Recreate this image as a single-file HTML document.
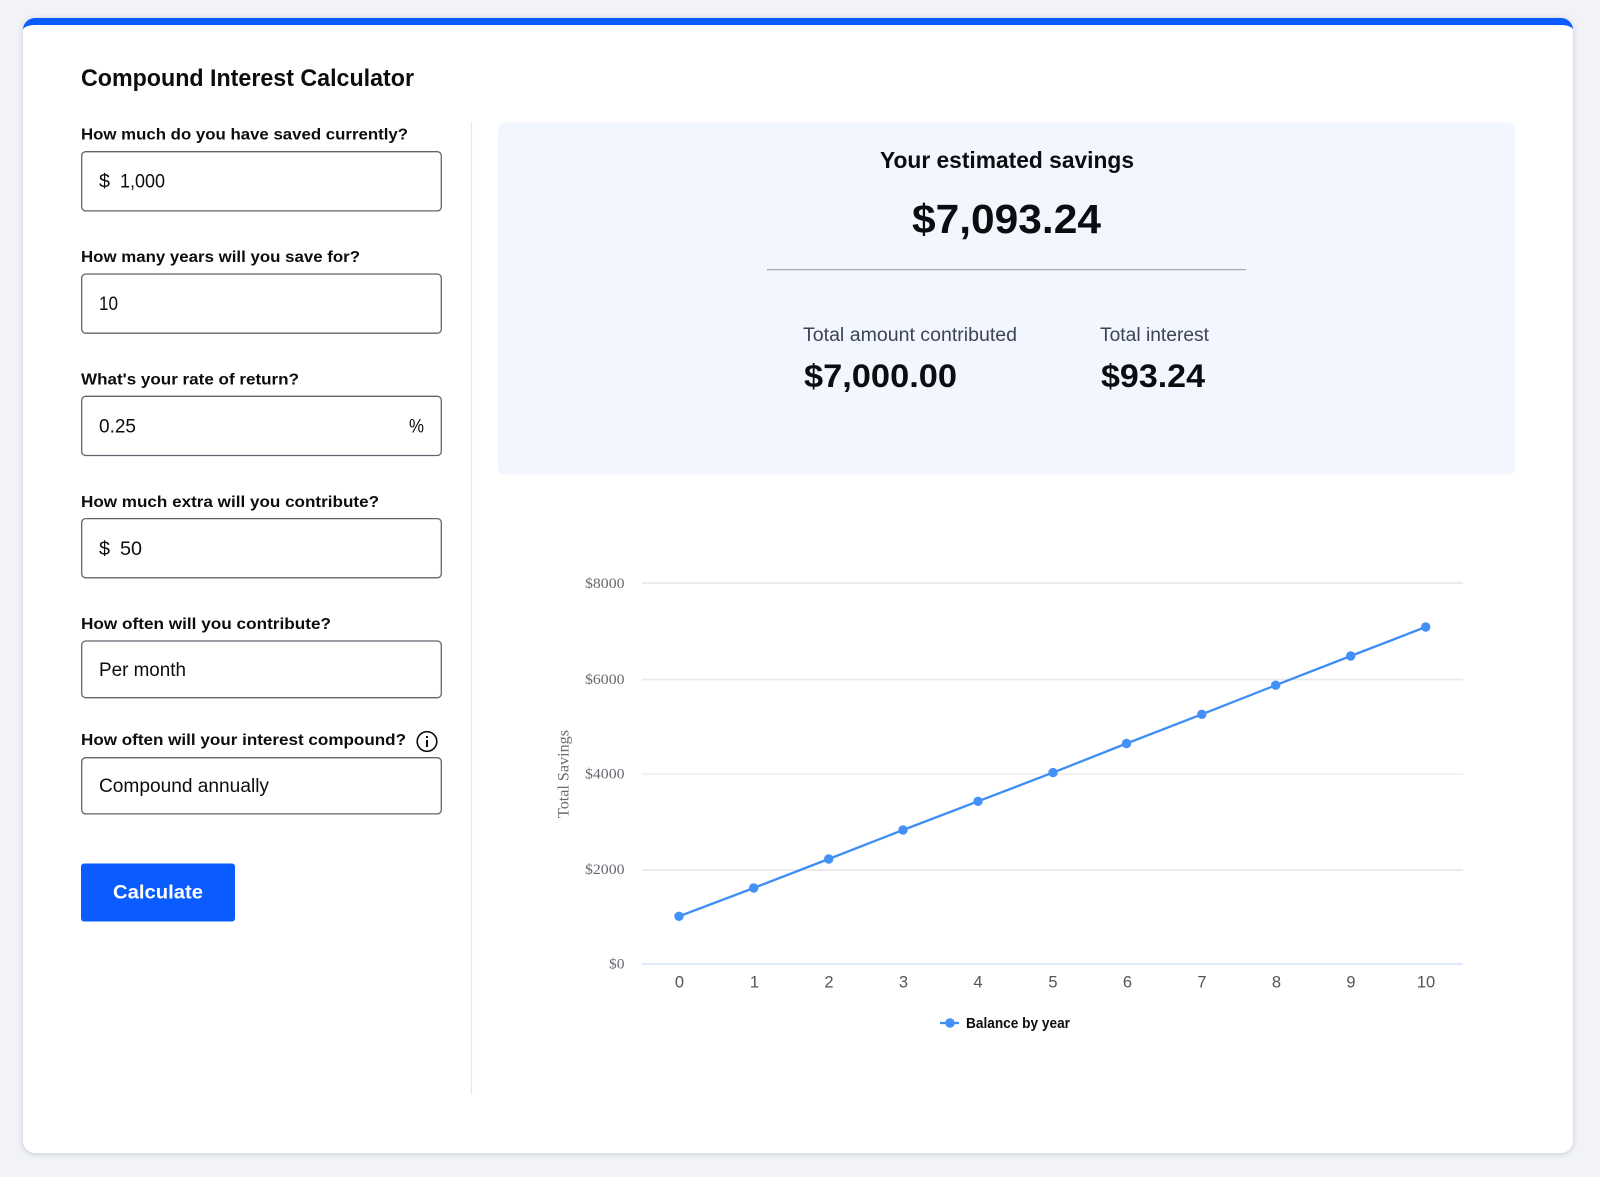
<!DOCTYPE html>
<html lang="en">
<head>
<meta charset="utf-8">
<title>Compound Interest Calculator</title>
<style>
html,body{margin:0;padding:0;background:#f1f3f7;}
body{width:1600px;height:1177px;position:relative;overflow:hidden;}
.card{position:absolute;left:23px;top:18px;width:1550px;height:1135px;box-sizing:border-box;background:#fff;border-top:7.5px solid #0a5cff;border-radius:12px;box-shadow:0 1px 6px rgba(60,70,100,.24);}
svg{position:absolute;left:0;top:0;}
text{font-family:"Liberation Sans",Arial,sans-serif;fill:#0c0d10;}
.l{font-size:16px;font-weight:700;}
.v{font-size:19px;}
.y{font-family:"Liberation Serif",serif;font-size:15px;fill:#666a70;}
.x{font-size:16.5px;fill:#555;text-anchor:middle;}
.box{fill:#fff;stroke:#62646f;stroke-width:1.3;}
.g{stroke:#eaeaea;stroke-width:1.8;}
</style>
</head>
<body>
<div class="card"></div>
<svg width="1600" height="1177" viewBox="0 0 1600 1177" xmlns="http://www.w3.org/2000/svg">
  <text x="81" y="86" font-size="24" font-weight="700" textLength="333" lengthAdjust="spacingAndGlyphs">Compound Interest Calculator</text>

  <text class="l" x="81" y="139.5" textLength="327" lengthAdjust="spacingAndGlyphs">How much do you have saved currently?</text>
  <rect class="box" x="81.7" y="151.7" width="359.6" height="59.2" rx="4"/>
  <text class="v" x="99" y="187.5" textLength="11" lengthAdjust="spacingAndGlyphs">$</text>
  <text class="v" x="120" y="187.5" textLength="45" lengthAdjust="spacingAndGlyphs">1,000</text>

  <text class="l" x="81" y="262" textLength="279" lengthAdjust="spacingAndGlyphs">How many years will you save for?</text>
  <rect class="box" x="81.7" y="274" width="359.6" height="59.2" rx="4"/>
  <text class="v" x="99" y="310" textLength="19" lengthAdjust="spacingAndGlyphs">10</text>

  <text class="l" x="81" y="384.5" textLength="218" lengthAdjust="spacingAndGlyphs">What's your rate of return?</text>
  <rect class="box" x="81.7" y="396.3" width="359.6" height="59.2" rx="4"/>
  <text class="v" x="99" y="432.5" textLength="37" lengthAdjust="spacingAndGlyphs">0.25</text>
  <text class="v" x="409" y="432.5" textLength="15" lengthAdjust="spacingAndGlyphs">%</text>

  <text class="l" x="81" y="507" textLength="298" lengthAdjust="spacingAndGlyphs">How much extra will you contribute?</text>
  <rect class="box" x="81.7" y="518.6" width="359.6" height="59.2" rx="4"/>
  <text class="v" x="99" y="555" textLength="11" lengthAdjust="spacingAndGlyphs">$</text>
  <text class="v" x="120" y="555" textLength="22" lengthAdjust="spacingAndGlyphs">50</text>

  <text class="l" x="81" y="629" textLength="250" lengthAdjust="spacingAndGlyphs">How often will you contribute?</text>
  <rect class="box" x="81.7" y="641" width="359.6" height="56.7" rx="4"/>
  <text class="v" x="99" y="676" textLength="87" lengthAdjust="spacingAndGlyphs">Per month</text>

  <text class="l" x="81" y="745" textLength="325" lengthAdjust="spacingAndGlyphs">How often will your interest compound?</text>
  <circle cx="427" cy="741.5" r="9.8" fill="none" stroke="#0c0d10" stroke-width="1.6"/>
  <rect x="426" y="740" width="2" height="7" fill="#0c0d10"/>
  <rect x="426" y="736" width="2" height="2" fill="#0c0d10"/>
  <rect class="box" x="81.7" y="757.7" width="359.6" height="56.2" rx="4"/>
  <text class="v" x="99" y="792" textLength="170" lengthAdjust="spacingAndGlyphs">Compound annually</text>

  <rect x="81" y="863.5" width="154" height="58" rx="3" fill="#0a5cff"/>
  <text x="113" y="898.5" font-size="19" font-weight="700" style="fill:#fff" textLength="90" lengthAdjust="spacingAndGlyphs">Calculate</text>

  <line x1="471.5" y1="122" x2="471.5" y2="1094.5" stroke="#e3e7ee" stroke-width="1.3"/>

  <rect x="498" y="122.5" width="1017" height="352" rx="7" fill="#f2f6fe"/>
  <text x="880" y="168" font-size="23" font-weight="700" textLength="254" lengthAdjust="spacingAndGlyphs">Your estimated savings</text>
  <text x="912" y="233" font-size="41" font-weight="700" textLength="189" lengthAdjust="spacingAndGlyphs">$7,093.24</text>
  <rect x="767" y="269" width="479" height="1.3" fill="#a9acb5"/>
  <text x="803" y="341" font-size="19" style="fill:#3f4452" textLength="214" lengthAdjust="spacingAndGlyphs">Total amount contributed</text>
  <text x="1100" y="341" font-size="19" style="fill:#3f4452" textLength="109" lengthAdjust="spacingAndGlyphs">Total interest</text>
  <text x="804" y="387" font-size="32" font-weight="700" textLength="153" lengthAdjust="spacingAndGlyphs">$7,000.00</text>
  <text x="1101" y="387" font-size="32" font-weight="700" textLength="104" lengthAdjust="spacingAndGlyphs">$93.24</text>

  <line class="g" x1="642" y1="583" x2="1463" y2="583"/>
  <line class="g" x1="642" y1="679.5" x2="1463" y2="679.5"/>
  <line class="g" x1="642" y1="774" x2="1463" y2="774" style="stroke-width:1.2"/>
  <line class="g" x1="642" y1="870" x2="1463" y2="870"/>
  <line x1="642" y1="964" x2="1463" y2="964" stroke="#c3d2f4" stroke-width="1"/>

  <text class="y" x="585" y="588" textLength="39.5" lengthAdjust="spacingAndGlyphs">$8000</text>
  <text class="y" x="585" y="684" textLength="39.5" lengthAdjust="spacingAndGlyphs">$6000</text>
  <text class="y" x="585" y="778.5" textLength="39.5" lengthAdjust="spacingAndGlyphs">$4000</text>
  <text class="y" x="585" y="874" textLength="39.5" lengthAdjust="spacingAndGlyphs">$2000</text>
  <text class="y" x="609" y="968.5" textLength="15.5" lengthAdjust="spacingAndGlyphs">$0</text>
  <text class="y" transform="translate(568.5,818) rotate(-90)" textLength="88" lengthAdjust="spacingAndGlyphs" style="font-size:15.5px">Total Savings</text>

  <polyline fill="none" stroke="#3d8df5" stroke-width="2.3" points="679,916.3 753.7,888 828.7,859 903,830 978,801.3 1053,772.6 1126.5,743.5 1201.8,714.3 1275.7,685.2 1350.7,656 1425.7,627"/>
  <g fill="#4390f9">
    <circle cx="679" cy="916.3" r="4.7"/><circle cx="753.7" cy="888" r="4.7"/><circle cx="828.7" cy="859" r="4.7"/><circle cx="903" cy="830" r="4.7"/><circle cx="978" cy="801.3" r="4.7"/><circle cx="1053" cy="772.6" r="4.7"/><circle cx="1126.5" cy="743.5" r="4.7"/><circle cx="1201.8" cy="714.3" r="4.7"/><circle cx="1275.7" cy="685.2" r="4.7"/><circle cx="1350.7" cy="656" r="4.7"/><circle cx="1425.7" cy="627" r="4.7"/>
  </g>

  <text class="x" x="679.5" y="987.5">0</text>
  <text class="x" x="754.5" y="987.5">1</text>
  <text class="x" x="829" y="987.5">2</text>
  <text class="x" x="903.5" y="987.5">3</text>
  <text class="x" x="978" y="987.5">4</text>
  <text class="x" x="1053" y="987.5">5</text>
  <text class="x" x="1127.5" y="987.5">6</text>
  <text class="x" x="1202" y="987.5">7</text>
  <text class="x" x="1276.5" y="987.5">8</text>
  <text class="x" x="1351" y="987.5">9</text>
  <text class="x" x="1426" y="987.5">10</text>

  <line x1="940" y1="1023" x2="959" y2="1023" stroke="#3d8df5" stroke-width="2.3"/>
  <circle cx="950" cy="1023" r="4.8" fill="#4390f9"/>
  <text x="966" y="1028" font-size="14.5" font-weight="700" textLength="104" lengthAdjust="spacingAndGlyphs">Balance by year</text>
</svg>
</body>
</html>
